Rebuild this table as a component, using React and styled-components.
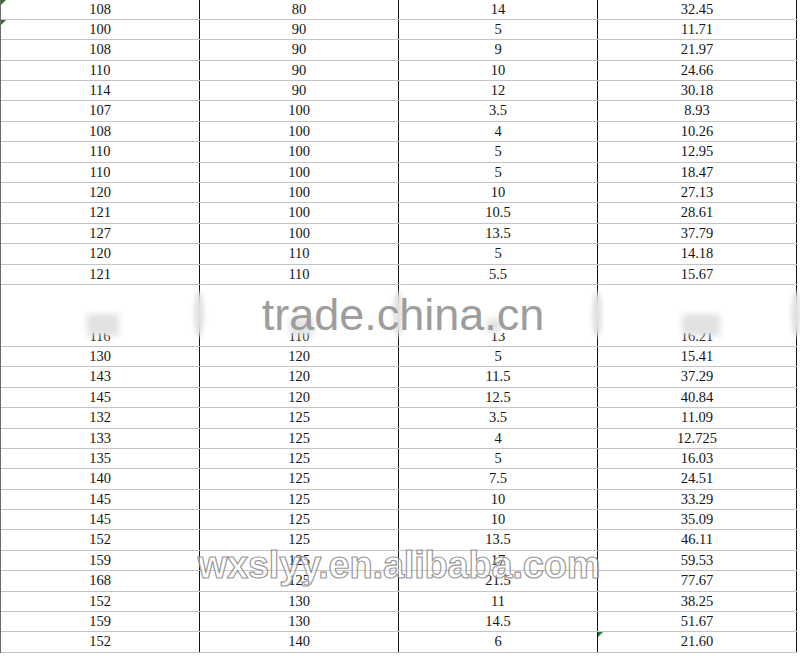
import React from "react";
import styled, { createGlobalStyle } from "styled-components";

const Global = createGlobalStyle`
  html, body { margin: 0; padding: 0; background: #fff; }
  body { width: 800px; height: 656px; overflow: hidden; }
`;

const Page = styled.div`
  width: 800px;
  height: 656px;
  overflow: hidden;
  background: #fff;
`;

const Sheet = styled.div`
  width: 797px;
  margin-top: -0.5px;
  border-left: 1px solid #6a6a6a;
  box-sizing: border-box;
  display: flex;
  flex-direction: column;
`;

const Section = styled.div`
  position: relative;
  display: flex;
  flex-direction: column;
`;

const Row = styled.div`
  display: grid;
  grid-template-columns: repeat(4, 199px);
  grid-template-rows: minmax(0, 1fr);
  height: ${(p) => p.$h || "20.4px"};
  box-sizing: border-box;
  border-bottom: 1px solid #c4c4c4;
  overflow: hidden;
`;

const Cell = styled.div`
  position: relative;
  display: flex;
  justify-content: center;
  align-items: ${(p) => (p.$clip ? "flex-end" : "center")};
  min-height: 0;
  border-right: 1px solid #111;
  box-sizing: border-box;
  font-family: "Liberation Serif", "Times New Roman", serif;
  font-size: 14.5px;
  color: #151515;
  line-height: 19.4px;
`;

const CellText = styled.span`
  display: block;
  flex: none;
  line-height: 19.4px;
  height: 19.4px;
`;

const Flag = styled.span`
  position: absolute;
  left: 0;
  top: 0;
  width: 0;
  height: 0;
  border-top: 5px solid #1f7a2a;
  border-right: 5px solid transparent;
`;

const Gap = styled.div`
  position: relative;
  display: grid;
  grid-template-columns: repeat(4, 199px);
  height: 48px;
`;

const GapCell = styled.div`
  position: relative;
  border-right: 1px solid #111;
  &::after {
    content: "";
    position: absolute;
    right: -5px;
    top: 6px;
    bottom: -4px;
    width: 10px;
    border-radius: 50%;
    background: #e2e2e2;
    filter: blur(2px);
    z-index: 2;
  }
`;

const Smudge = styled.div`
  position: absolute;
  background: #dadada;
  filter: blur(3px);
  opacity: 0.8;
  z-index: 3;
`;

const TradeMark = styled.div`
  position: absolute;
  left: 8px;
  right: 0;
  top: 7px;
  text-align: center;
  font-family: "Liberation Sans", Arial, sans-serif;
  font-size: 45px;
  line-height: 1;
  color: #9d9d9d;
  z-index: 4;
  white-space: nowrap;
`;

const OutlineMark = styled.div`
  position: absolute;
  left: 0;
  right: 0;
  top: 199px;
  text-align: center;
  font-family: "Liberation Sans", Arial, sans-serif;
  font-weight: 700;
  font-size: 38px;
  letter-spacing: -0.2px;
  line-height: 1;
  color: rgba(255, 255, 255, 0.5);
  -webkit-text-stroke: 1.2px rgba(140, 140, 140, 0.9);
  z-index: 4;
  white-space: nowrap;
  pointer-events: none;
`;

const topRows = [
  ["108", "80", "14", "32.45"],
  ["100", "90", "5", "11.71"],
  ["108", "90", "9", "21.97"],
  ["110", "90", "10", "24.66"],
  ["114", "90", "12", "30.18"],
  ["107", "100", "3.5", "8.93"],
  ["108", "100", "4", "10.26"],
  ["110", "100", "5", "12.95"],
  ["110", "100", "5", "18.47"],
  ["120", "100", "10", "27.13"],
  ["121", "100", "10.5", "28.61"],
  ["127", "100", "13.5", "37.79"],
  ["120", "110", "5", "14.18"],
  ["121", "110", "5.5", "15.67"],
];

const clippedRow = ["116", "110", "13", "16.21"];

const bottomRows = [
  ["130", "120", "5", "15.41"],
  ["143", "120", "11.5", "37.29"],
  ["145", "120", "12.5", "40.84"],
  ["132", "125", "3.5", "11.09"],
  ["133", "125", "4", "12.725"],
  ["135", "125", "5", "16.03"],
  ["140", "125", "7.5", "24.51"],
  ["145", "125", "10", "33.29"],
  ["145", "125", "10", "35.09"],
  ["152", "125", "13.5", "46.11"],
  ["159", "125", "17", "59.53"],
  ["168", "125", "21.5", "77.67"],
  ["152", "130", "11", "38.25"],
  ["159", "130", "14.5", "51.67"],
  ["152", "140", "6", "21.60"],
];

function DataRow({ values, flags = [], clip, h }) {
  return (
    <Row $h={h}>
      {values.map((v, i) => (
        <Cell key={i} $clip={clip}>
          {flags.includes(i) && <Flag />}
          <CellText>{v}</CellText>
        </Cell>
      ))}
    </Row>
  );
}

const smudges = [
  { left: 86, top: 29, width: 32, height: 22 },
  { left: 289, top: 33, width: 24, height: 18 },
  { left: 486, top: 34, width: 14, height: 14 },
  { left: 681, top: 29, width: 38, height: 22 },
];

export default function App() {
  return (
    <Page>
      <Global />
      <Sheet>
        <Section>
          {topRows.map((r, i) => (
            <DataRow key={i} values={r} flags={i < 2 ? [0] : []} />
          ))}
        </Section>
        <Gap>
          <GapCell />
          <GapCell />
          <GapCell />
          <GapCell />
          {smudges.map((s, i) => (
            <Smudge
              key={i}
              style={{ left: s.left, top: s.top, width: s.width, height: s.height }}
            />
          ))}
          <TradeMark>trade.china.cn</TradeMark>
        </Gap>
        <DataRow values={clippedRow} clip h="14px" />
        <Section>
          {bottomRows.map((r, i) => (
            <DataRow
              key={i}
              values={r}
              flags={i === bottomRows.length - 1 ? [3] : []}
            />
          ))}
          <OutlineMark>wxslyy.en.alibaba.com</OutlineMark>
        </Section>
      </Sheet>
    </Page>
  );
}
